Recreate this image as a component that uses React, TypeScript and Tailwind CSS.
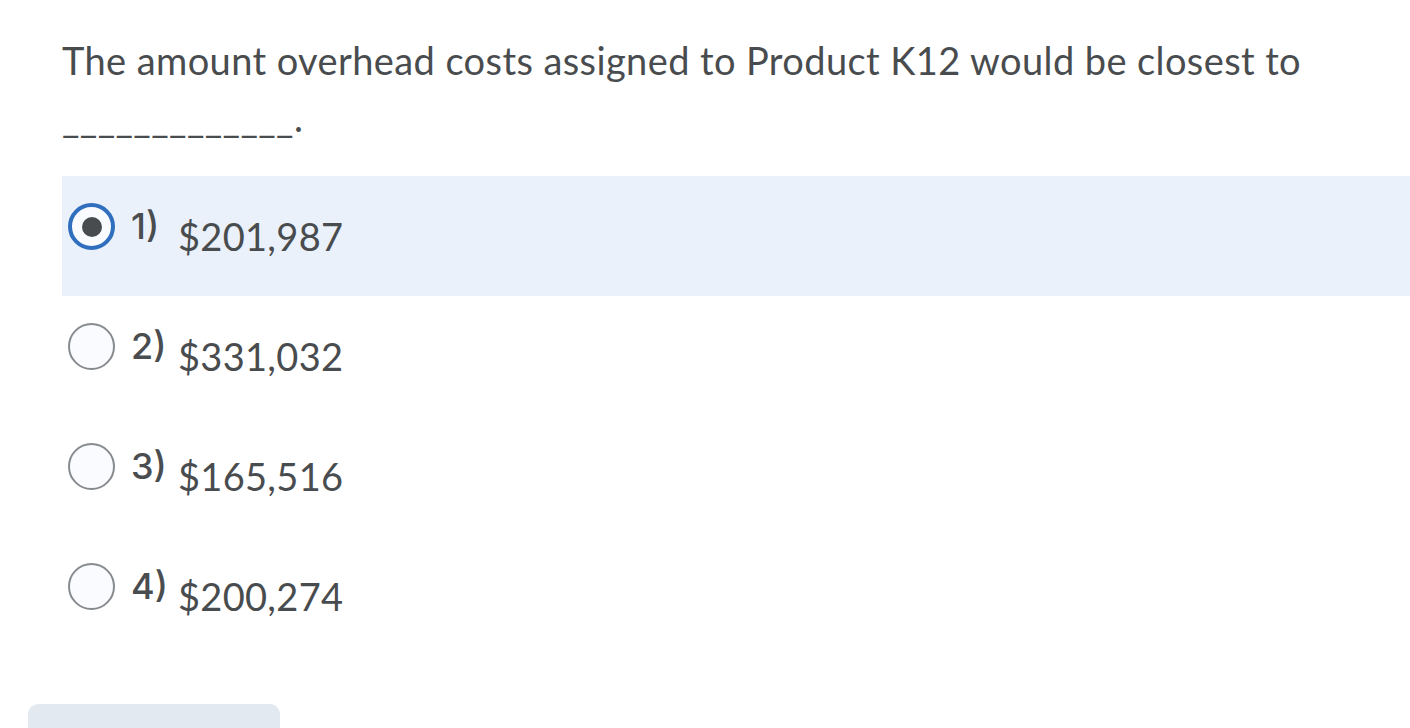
import React from "react";

const options = [
  { n: "1)", v: "$201,987", selected: true },
  { n: "2)", v: "$331,032", selected: false },
  { n: "3)", v: "$165,516", selected: false },
  { n: "4)", v: "$200,274", selected: false },
];

function Radio({ selected }: { selected: boolean }) {
  if (selected) {
    return (
      <div className="w-[47px] h-[47px] shrink-0 rounded-full border-[4px] border-[#2f6fbd] bg-[#f9fbff] flex items-center justify-center">
        <div className="w-[20px] h-[20px] rounded-full bg-[#494c4e]" />
      </div>
    );
  }
  return (
    <div className="w-[47px] h-[47px] shrink-0 rounded-full border-[2px] border-[#878b8e] bg-[#f9fbff]" />
  );
}

export default function App() {
  return (
    <div className="w-[1410px] h-[728px] overflow-hidden bg-white text-[#494c4e] font-['Lato',sans-serif]">
      <div className="pl-[62px] pt-[32px]">
        <p className="text-[38px] leading-[57px] tracking-[0.4px]">
          The amount overhead costs assigned to Product K12 would be closest to
          <br />
          <span>_____________.</span>
        </p>
        <div className="mt-[30px] flex flex-col">
          {options.map((o) => (
            <div
              key={o.n}
              className={`h-[120px] flex items-start pl-[6px] ${o.selected ? "bg-[#eaf1fb]" : ""}`}
            >
              <div className="pt-[27px]">
                <Radio selected={o.selected} />
              </div>
              <span className="ml-[16px] w-[47px] shrink-0 mt-[30px] text-[36px] leading-[40px] font-medium font-['Inter',sans-serif] text-[#4a4d50]">
                {o.n}
              </span>
              <span className="mt-[38px] text-[38px] leading-[45px] tracking-[0.3px]">
                {o.v}
              </span>
            </div>
          ))}
        </div>
      </div>
      <div className="ml-[28px] mt-[48px] w-[252px] h-[60px] rounded-[10px] bg-[#e3e9f1]" />
    </div>
  );
}
